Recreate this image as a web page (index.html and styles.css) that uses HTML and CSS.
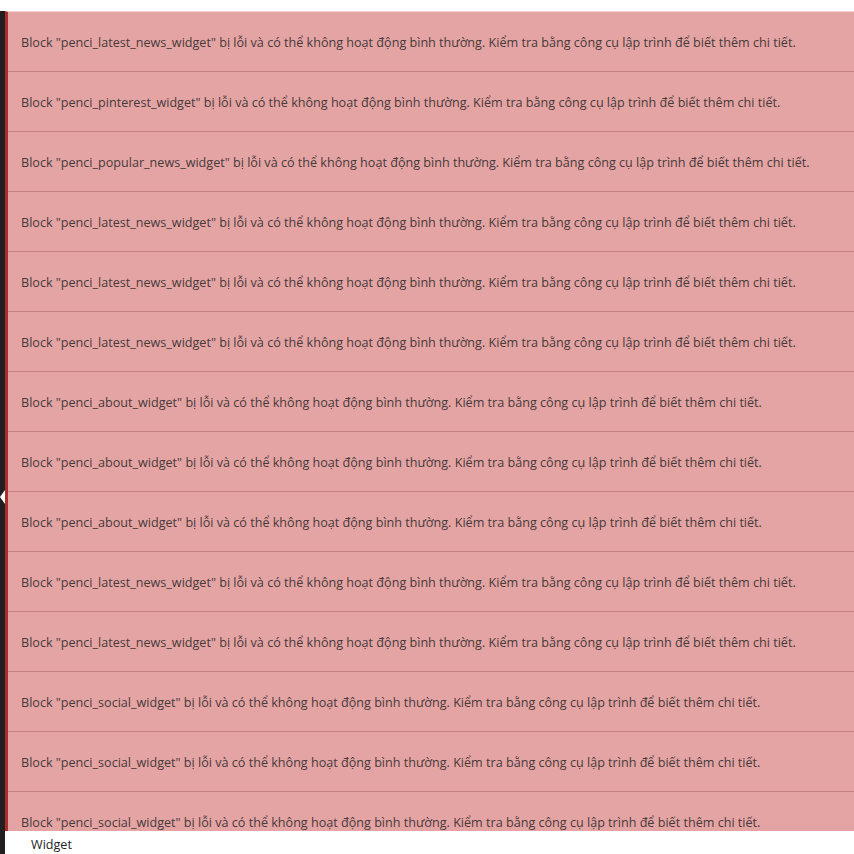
FILE: index.html
```html
<!DOCTYPE html>
<html lang="vi">
<head>
    <meta charset="UTF-8">
    <meta name="viewport" content="width=device-width, initial-scale=1.0">
    <title>Widget</title>
    <link rel="stylesheet" href="styles.css">
</head>
<body>
    <div class="side-bar">
        <span class="side-arrow"></span>
    </div>
    <div class="main">
        <div class="blocks">
            <div class="block-error">Block "penci_latest_news_widget" bị lỗi và có thể không hoạt động bình thường. Kiểm tra bằng công cụ lập trình để biết thêm chi tiết.</div>
            <div class="block-error">Block "penci_pinterest_widget" bị lỗi và có thể không hoạt động bình thường. Kiểm tra bằng công cụ lập trình để biết thêm chi tiết.</div>
            <div class="block-error">Block "penci_popular_news_widget" bị lỗi và có thể không hoạt động bình thường. Kiểm tra bằng công cụ lập trình để biết thêm chi tiết.</div>
            <div class="block-error">Block "penci_latest_news_widget" bị lỗi và có thể không hoạt động bình thường. Kiểm tra bằng công cụ lập trình để biết thêm chi tiết.</div>
            <div class="block-error">Block "penci_latest_news_widget" bị lỗi và có thể không hoạt động bình thường. Kiểm tra bằng công cụ lập trình để biết thêm chi tiết.</div>
            <div class="block-error">Block "penci_latest_news_widget" bị lỗi và có thể không hoạt động bình thường. Kiểm tra bằng công cụ lập trình để biết thêm chi tiết.</div>
            <div class="block-error">Block "penci_about_widget" bị lỗi và có thể không hoạt động bình thường. Kiểm tra bằng công cụ lập trình để biết thêm chi tiết.</div>
            <div class="block-error">Block "penci_about_widget" bị lỗi và có thể không hoạt động bình thường. Kiểm tra bằng công cụ lập trình để biết thêm chi tiết.</div>
            <div class="block-error">Block "penci_about_widget" bị lỗi và có thể không hoạt động bình thường. Kiểm tra bằng công cụ lập trình để biết thêm chi tiết.</div>
            <div class="block-error">Block "penci_latest_news_widget" bị lỗi và có thể không hoạt động bình thường. Kiểm tra bằng công cụ lập trình để biết thêm chi tiết.</div>
            <div class="block-error">Block "penci_latest_news_widget" bị lỗi và có thể không hoạt động bình thường. Kiểm tra bằng công cụ lập trình để biết thêm chi tiết.</div>
            <div class="block-error">Block "penci_social_widget" bị lỗi và có thể không hoạt động bình thường. Kiểm tra bằng công cụ lập trình để biết thêm chi tiết.</div>
            <div class="block-error">Block "penci_social_widget" bị lỗi và có thể không hoạt động bình thường. Kiểm tra bằng công cụ lập trình để biết thêm chi tiết.</div>
            <div class="block-error">Block "penci_social_widget" bị lỗi và có thể không hoạt động bình thường. Kiểm tra bằng công cụ lập trình để biết thêm chi tiết.</div>
        </div>
        <div class="footer">Widget</div>
    </div>
</body>
</html>
```

FILE: styles.css
```css
html, body {
    height: 100%;
}
body {
    margin: 0;
    font-family: "Open Sans", "Noto Sans", sans-serif;
    background: #fff;
    display: flex;
    overflow: hidden;
}
.side-bar {
    width: 5px;
    margin-top: 11px;
    background: #231f20;
    position: relative;
    flex-shrink: 0;
}
.side-arrow {
    position: absolute;
    left: 0;
    top: 479px;
    width: 0;
    height: 0;
    border-top: 7px solid transparent;
    border-bottom: 7px solid transparent;
    border-right: 5px solid #fff;
}
.main {
    flex: 1;
    display: flex;
    flex-direction: column;
    padding-top: 11px;
    min-width: 0;
}
.blocks {
    height: 820px;
    overflow: hidden;
    background: #e5a4a4;
    border-left: 3px solid #a8302c;
    border-top: 1px solid #f0cfcf;
    box-sizing: border-box;
}
.block-error {
    height: 60px;
    box-sizing: border-box;
    padding: 2px 13px 0;
    display: flex;
    align-items: center;
    font-size: 12.6px;
    color: #473a3a;
    border-bottom: 1px solid #c47f7f;
    white-space: nowrap;
}
.footer {
    padding: 5px 0 0 26px;
    font-size: 12.6px;
    color: #1e1e1e;
}
```
